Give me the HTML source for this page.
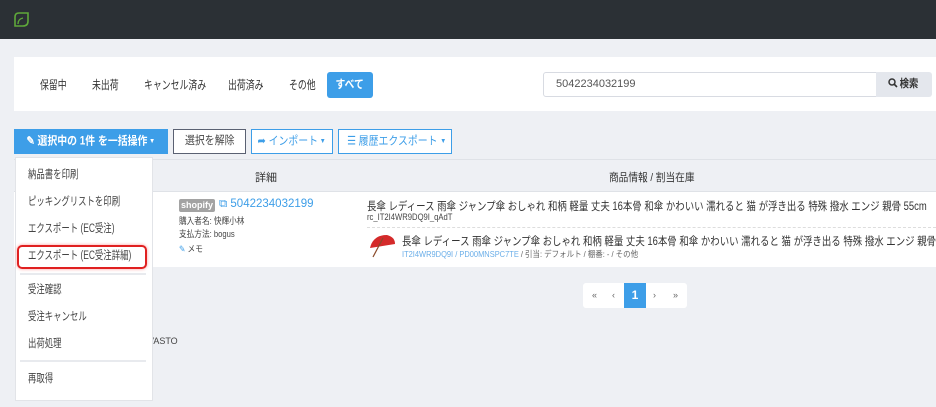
<!DOCTYPE html>
<html><head><meta charset="utf-8"><style>
*{box-sizing:border-box;margin:0;padding:0}
body{width:936px;height:407px;overflow:hidden;background:#eef0f4;font-family:"Liberation Sans","Noto Sans CJK JP",sans-serif;color:#333;position:relative;font-size:12px}
.a{position:absolute;white-space:nowrap}
.top{left:0;top:0;width:936px;height:39px;background:#2b3035}
.card{left:14px;top:57px;width:922px;height:54px;background:#fff}
.tab{top:76px;font-size:12px;color:#333;transform:scaleX(.74);transform-origin:left}
.btn{top:129px;height:25px;font-size:11.5px;line-height:23px;text-align:center;border:1px solid #3d9ee8;color:#3d9ee8;background:#fff;overflow:hidden}
.btn span.i{display:inline-block;transform:scaleX(.86)}
.dd{left:15px;top:157px;width:138px;height:244px;background:#fff;border:1px solid #e2e4e8}
.it{left:28px;font-size:11.5px;color:#444;transform:scaleX(.73);transform-origin:left}
.dv{left:20px;width:126px;height:2px;background:#e8eaee}
.sm{font-size:9px;color:#444;transform:scaleX(.85);transform-origin:left}
.car{font-size:7px;vertical-align:middle}
.t{font-size:11.5px;transform:scaleX(.82);transform-origin:left}
</style></head><body>
<div class="a top"></div>
<svg class="a" style="left:13px;top:11px" width="17" height="17" viewBox="0 0 17 17"><path d="M2 15 V6 Q2 2 6 2 H15 V10 Q15 15 10 15 Z" fill="none" stroke="#5fa83a" stroke-width="1.6"/><path d="M5 13 Q5 8 10 7" fill="none" stroke="#5fa83a" stroke-width="1.4"/></svg>
<div class="a card"></div>
<div class="a tab" style="left:40px">保留中</div>
<div class="a tab" style="left:92px">未出荷</div>
<div class="a tab" style="left:144px">キャンセル済み</div>
<div class="a tab" style="left:228px">出荷済み</div>
<div class="a tab" style="left:289px">その他</div>
<div class="a" style="left:327px;top:72px;width:46px;height:26px;background:#3d9ee8;border-radius:3px;color:#fff;font-weight:bold;font-size:11.5px;line-height:26px;text-align:center"><span style="display:inline-block;transform:scaleX(.85)">すべて</span></div>
<div class="a" style="left:543px;top:72px;width:334px;height:25px;border:1px solid #d8dbe2;border-radius:3px 0 0 3px;background:#fff;font-size:11px;line-height:23px;padding-left:12px;color:#555">5042234032199</div>
<div class="a" style="left:876px;top:72px;width:56px;height:25px;background:#e4e7ed;border-radius:0 3px 3px 0;line-height:25px;text-align:center;font-size:11px;font-weight:bold;color:#333"><svg width="10" height="10" viewBox="0 0 10 10" style="vertical-align:-1px"><circle cx="4" cy="4" r="3" fill="none" stroke="#333" stroke-width="1.5"/><path d="M6 6 L9 9" stroke="#333" stroke-width="1.6"/></svg><span style="display:inline-block;transform:scaleX(.85)">検索</span></div>
<div class="a btn" style="left:14px;width:154px;background:#3d9ee8;color:#fff;font-weight:bold"><span class="i">&#x270E; 選択中の 1件 を一括操作<span class="car"> ▼</span></span></div>
<div class="a btn" style="left:173px;width:73px;border-color:#5a6172;color:#444"><span class="i">選択を解除</span></div>
<div class="a btn" style="left:251px;width:82px"><span class="i">➦ インポート<span class="car"> ▼</span></span></div>
<div class="a btn" style="left:338px;width:114px"><span class="i">☰ 履歴エクスポート <span class="car">▼</span></span></div>
<div class="a" style="left:14px;top:159px;width:922px;height:33px;border-top:1px solid #dfe2e7;border-bottom:1px solid #dfe2e7"></div>
<div class="a" style="left:255px;top:169px;font-size:11px">詳細</div>
<div class="a" style="left:609px;top:169px;font-size:11px;transform:scaleX(.88);transform-origin:left">商品情報 / 割当在庫</div>
<div class="a" style="left:14px;top:192px;width:922px;height:75px;background:#fff"></div>
<div class="a" style="left:179px;top:199px;width:36px;height:13px;background:#a3a3a3;border-radius:2px;color:#fff;font-size:9px;font-weight:bold;text-align:center;line-height:13px">shopify</div>
<div class="a" style="left:219px;top:198px;color:#3d9ee8;font-size:11.5px">⧉ 5042234032199</div>
<div class="a sm" style="left:179px;top:214px">購入者名: 快輝小林</div>
<div class="a sm" style="left:179px;top:227px">支払方法: bogus</div>
<div class="a sm" style="left:179px;top:242px"><span style="color:#3d9ee8">✎</span> メモ</div>
<div class="a t" style="left:367px;top:198px">長傘 レディース 雨傘 ジャンプ傘 おしゃれ 和柄 軽量 丈夫 16本骨 和傘 かわいい 濡れると 猫 が浮き出る 特殊 撥水 エンジ 親骨 55cm</div>
<div class="a sm" style="left:367px;top:212px">rc_IT2I4WR9DQ9I_qAdT</div>
<div class="a" style="left:367px;top:227px;width:569px;border-top:1px dashed #ddd"></div>
<svg class="a" style="left:367px;top:232px" width="30" height="28" viewBox="0 0 30 28"><path d="M3 16 Q6 3 20 3 Q28 5 28 12 Z" fill="#d42a2a"/><path d="M16 6 L6 25" stroke="#8a4a2a" stroke-width="1.2"/></svg>
<div class="a t" style="left:402px;top:233px">長傘 レディース 雨傘 ジャンプ傘 おしゃれ 和柄 軽量 丈夫 16本骨 和傘 かわいい 濡れると 猫 が浮き出る 特殊 撥水 エンジ 親骨</div>
<div class="a" style="left:402px;top:248px;font-size:8.5px;color:#6aaee8;transform:scaleX(.88);transform-origin:left">IT2I4WR9DQ9I / PD00MNSPC7TE <span style="color:#666">/ 引当: デフォルト / 棚番: - / その他</span></div>
<div class="a" style="left:583px;top:283px;width:104px;height:25px;background:#fff;border-radius:3px"></div>
<div class="a" style="left:592px;top:290px;font-size:9px;color:#666">«</div>
<div class="a" style="left:612px;top:290px;font-size:9px;color:#666">‹</div>
<div class="a" style="left:624px;top:283px;width:22px;height:25px;background:#3d9ee8;color:#fff;font-weight:bold;text-align:center;line-height:25px">1</div>
<div class="a" style="left:653px;top:290px;font-size:9px;color:#666">›</div>
<div class="a" style="left:673px;top:290px;font-size:9px;color:#666">»</div>
<div class="a" style="left:148px;top:336px;font-size:9px;color:#444">VASTO</div>
<div class="a dd"></div>
<div class="a it" style="top:166px">納品書を印刷</div>
<div class="a it" style="top:193px">ピッキングリストを印刷</div>
<div class="a it" style="top:220px">エクスポート (EC受注)</div>
<div class="a" style="left:17px;top:245px;width:130px;height:24px;border:2px solid #e02020;border-radius:5px;box-shadow:0 0 3px #f99"></div>
<div class="a it" style="top:247px">エクスポート (EC受注詳細)</div>
<div class="a dv" style="top:273px"></div>
<div class="a it" style="top:281px">受注確認</div>
<div class="a it" style="top:308px">受注キャンセル</div>
<div class="a it" style="top:335px">出荷処理</div>
<div class="a dv" style="top:360px"></div>
<div class="a it" style="top:370px">再取得</div>
</body></html>
